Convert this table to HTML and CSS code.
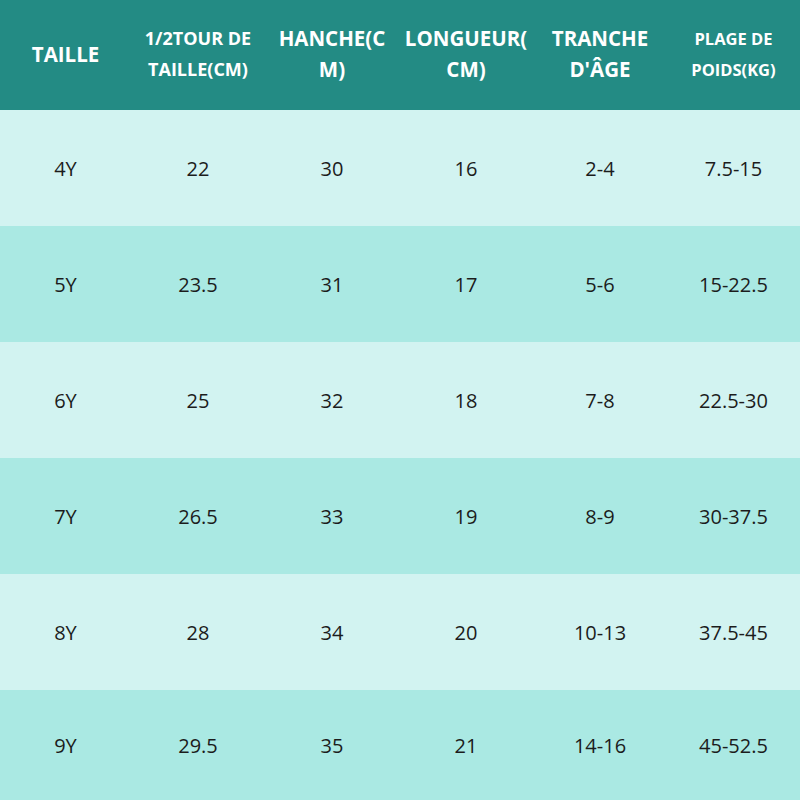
FILE: index.html
```html
<!DOCTYPE html>
<html>
<head>
<meta charset="utf-8">
<link rel="stylesheet" href="styles.css">
</head>
<body>
<div class="table">
  <div class="row head">
    <div class="cell h-lg">TAILLE</div>
    <div class="cell h-sm">1/2TOUR DE<br>TAILLE(CM)</div>
    <div class="cell h-lg">HANCHE(C<br>M)</div>
    <div class="cell h-lg">LONGUEUR(<br>CM)</div>
    <div class="cell h-lg">TRANCHE<br>D'ÂGE</div>
    <div class="cell h-xs">PLAGE DE<br>POIDS(KG)</div>
  </div>
  <div class="row light"><div class="cell">4Y</div><div class="cell">22</div><div class="cell">30</div><div class="cell">16</div><div class="cell">2-4</div><div class="cell">7.5-15</div></div>
  <div class="row dark"><div class="cell">5Y</div><div class="cell">23.5</div><div class="cell">31</div><div class="cell">17</div><div class="cell">5-6</div><div class="cell">15-22.5</div></div>
  <div class="row light"><div class="cell">6Y</div><div class="cell">25</div><div class="cell">32</div><div class="cell">18</div><div class="cell">7-8</div><div class="cell">22.5-30</div></div>
  <div class="row dark"><div class="cell">7Y</div><div class="cell">26.5</div><div class="cell">33</div><div class="cell">19</div><div class="cell">8-9</div><div class="cell">30-37.5</div></div>
  <div class="row light"><div class="cell">8Y</div><div class="cell">28</div><div class="cell">34</div><div class="cell">20</div><div class="cell">10-13</div><div class="cell">37.5-45</div></div>
  <div class="row dark last"><div class="cell">9Y</div><div class="cell">29.5</div><div class="cell">35</div><div class="cell">21</div><div class="cell">14-16</div><div class="cell">45-52.5</div></div>
</div>
</body>
</html>
```

FILE: styles.css
```css
html, body {
  margin: 0;
  padding: 0;
  width: 800px;
  height: 800px;
  overflow: hidden;
}
body {
  font-family: "Open Sans", "DejaVu Sans", sans-serif;
  color: #1c1c1c;
}
.table {
  display: flex;
  flex-direction: column;
  width: 800px;
}
.row {
  display: grid;
  grid-template-columns: 131px 134px 134px 134px 134px 133px;
  height: 116px;
  align-items: center;
}
.row.head {
  height: 110px;
  background: #238b84;
  color: #ffffff;
  font-weight: 700;
}
.row.light { background: #d2f3f1; }
.row.dark { background: #aae9e3; }
.row.last { height: 111px; }
.cell {
  text-align: center;
  font-size: 20px;
  white-space: nowrap;
}
.head .cell {
  line-height: 31px;
  margin-top: -2px;
}
.h-lg { font-size: 20.5px; }
.h-sm { font-size: 18px; }
.h-xs { font-size: 16.5px; }
```
